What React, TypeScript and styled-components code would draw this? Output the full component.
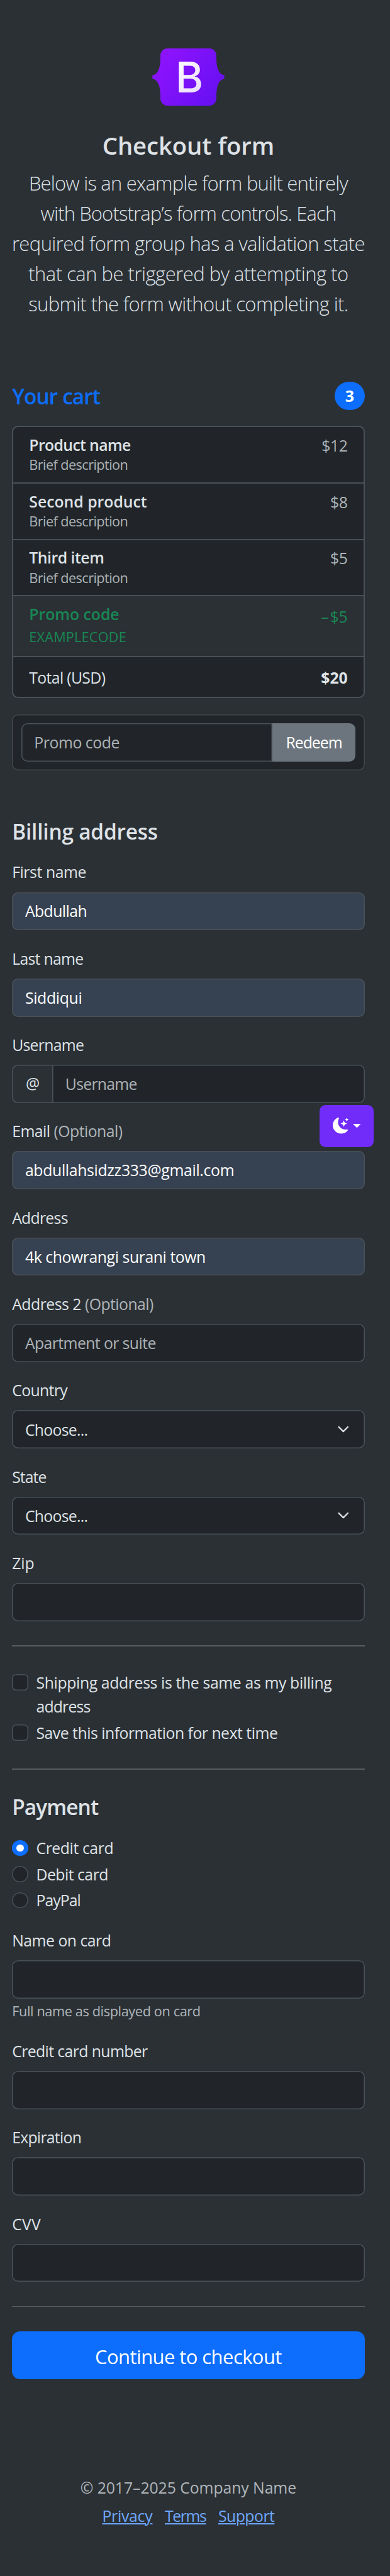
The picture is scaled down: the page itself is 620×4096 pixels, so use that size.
import React from 'react';
import styled, { createGlobalStyle } from 'styled-components';

const color = {
  page: '#2b3035',
  surface: '#212529',
  text: '#dee2e6',
  muted: 'rgba(222, 226, 230, 0.75)',
  border: '#495057',
  cardBorder: '#42464a',
  autofill: '#364151',
  primary: '#0d6efd',
  success: '#198754',
  secondary: '#6c757d',
  link: '#6ea8fe',
  violet: '#712cf9',
};

const GlobalStyle = createGlobalStyle`
  *, *::before, *::after { box-sizing: border-box; }
  html { font-size: 25.5504px; background: ${color.page}; }
  body {
    margin: 0;
    font-family: "Open Sans", "Noto Sans", sans-serif;
    font-size: 0.97rem;
    line-height: 1.5rem;
    letter-spacing: -0.5px;
    color: ${color.text};
    background: ${color.page};
    overflow-x: hidden;
  }
  h1, h2, p, ul { margin: 0; padding: 0; font: inherit; }
  ul { list-style: none; }
`;

/* Inline run of text with its own tracking and baseline drop */
const T = styled.span<{ $ls?: number; $drop?: number }>`
  line-height: 1;
  letter-spacing: ${(p) => p.$ls ?? -0.5}px;
  vertical-align: ${(p) => -(p.$drop ?? 0.6)}px;
`;

const Page = styled.div`
  position: relative;
  width: 100%;
  min-height: 4096px;
`;

const Container = styled.div`
  width: 23.4375rem;
  padding: 0 0.75rem;
`;

const Hero = styled.header`
  display: flex;
  flex-direction: column;
  align-items: center;
  padding: 3rem 0 4rem;
  text-align: center;
`;

const Logo = styled.svg`
  display: block;
  width: 4.5rem;
  height: 3.5625rem;
  margin-bottom: 1.5rem;
`;

const HeroTitle = styled.h1`
  margin-bottom: 0.5rem;
  font-size: 1.497rem;
  font-weight: 600;
  line-height: 1.853rem;
`;

const Lead = styled.p`
  font-size: 1.2125rem;
  font-weight: 300;
  line-height: 1.875rem;
  white-space: nowrap;
`;

const CartHeader = styled.div`
  display: flex;
  align-items: center;
  justify-content: space-between;
  height: 1.71rem;
  margin-bottom: 1rem;
  color: ${color.primary};
`;

const CartTitle = styled.h2`
  font-size: 1.307rem;
  font-weight: 600;
  line-height: 1.617rem;
`;

const Badge = styled.span`
  display: flex;
  align-items: center;
  justify-content: center;
  width: 1.875rem;
  height: 1.75rem;
  border-radius: 0.94rem;
  background: ${color.primary};
  color: #fff;
  font-weight: 700;
  font-size: 0.98rem;
  line-height: 1;
`;

const CartList = styled.ul`
  border-radius: 0.375rem;
  border: 2px solid ${color.border};
  background: ${color.surface};
  overflow: hidden;
`;

const CartRow = styled.li<{ $h: number; $promo?: boolean }>`
  display: flex;
  justify-content: space-between;
  height: ${(p) => p.$h}rem;
  padding: 0.5rem 0.985rem 0;
  background: ${(p) => (p.$promo ? color.page : 'transparent')};
  color: ${(p) => (p.$promo ? color.success : color.text)};
  & + & { border-top: 2px solid ${color.border}; }
`;

const ItemName = styled.div`
  font-weight: 600;
  line-height: 1.2rem;
`;

const ItemNote = styled.div<{ $lh: number; $muted?: boolean }>`
  font-size: 0.849rem;
  line-height: ${(p) => p.$lh}rem;
  color: ${(p) => (p.$muted ? color.muted : 'inherit')};
`;

const Price = styled.span<{ $lh: number; $muted?: boolean; $bold?: boolean }>`
  line-height: ${(p) => p.$lh}rem;
  font-weight: ${(p) => (p.$bold ? 700 : 400)};
  color: ${(p) => (p.$muted ? color.muted : 'inherit')};
`;

const PromoCard = styled.div`
  display: flex;
  height: 3.5rem;
  margin-top: 1rem;
  padding: 0.5625rem;
  border-radius: 0.375rem;
  background: ${color.surface};
  box-shadow: inset 0 0 0 1.6px ${color.cardBorder};
`;

const Control = styled.input<{ $filled?: boolean; $ls?: number; $join?: 'left' | 'right' }>`
  display: block;
  flex: 1;
  width: 100%;
  min-width: 0;
  height: 2.375rem;
  margin: 0;
  padding: 0 0.8125rem;
  border: 0;
  outline: 0;
  border-radius: ${(p) =>
    p.$join === 'left' ? '0.375rem 0 0 0.375rem' : p.$join === 'right' ? '0 0.375rem 0.375rem 0' : '0.375rem'};
  background: ${(p) => (p.$filled ? color.autofill : color.surface)};
  box-shadow: inset 0 0 0 1.6px ${color.border};
  color: ${(p) => (p.$filled ? '#fff' : color.text)};
  font-family: inherit;
  font-size: 0.97rem;
  letter-spacing: ${(p) => p.$ls ?? -0.5}px;
  &::placeholder { color: ${color.muted}; opacity: 1; }
`;

const RedeemButton = styled.button`
  width: 5.1875rem;
  height: 2.375rem;
  margin: 0;
  padding: 0;
  border: 0;
  border-radius: 0 0.375rem 0.375rem 0;
  background: ${color.secondary};
  color: #fff;
  font-family: inherit;
  font-size: 0.97rem;
  letter-spacing: -1px;
`;

const SectionTitle = styled.h2`
  margin-bottom: 1rem;
  font-size: 1.307rem;
  font-weight: 600;
  line-height: 1.625rem;
`;

const Billing = styled.section`
  padding-top: 2.9375rem;
`;

const Fields = styled.div`
  display: flex;
  flex-direction: column;
  gap: 1rem;
`;

const Field = styled.div`
  display: flex;
  flex-direction: column;
`;

const Label = styled.label`
  margin-bottom: 0.5rem;
`;

const Muted = styled.span`
  color: ${color.muted};
`;

const Group = styled.div`
  display: flex;
`;

const Addon = styled.span`
  display: flex;
  align-items: center;
  justify-content: center;
  width: 2.5625rem;
  height: 2.375rem;
  margin-right: -0.0625rem;
  border-radius: 0.375rem 0 0 0.375rem;
  background: ${color.page};
  box-shadow: inset 0 0 0 1.6px ${color.border};
`;

const Select = styled.div`
  display: flex;
  align-items: center;
  justify-content: space-between;
  height: 2.375rem;
  padding: 0 0.8125rem;
  border-radius: 0.375rem;
  background: ${color.surface};
  box-shadow: inset 0 0 0 1.6px ${color.border};
`;

const Chevron = styled.svg`
  width: 1rem;
  height: 0.75rem;
`;

const Rule = styled.hr`
  height: 0.0625rem;
  margin: 1.5rem 0;
  border: 0;
  background: #585c60;
`;

const Checks = styled.div`
  display: flex;
  flex-direction: column;
  gap: 0.125rem;
`;

const CheckRow = styled.label`
  display: flex;
  gap: 0.5rem;
`;

const Mark = styled.span<{ $round?: boolean; $on?: boolean }>`
  display: flex;
  flex: none;
  align-items: center;
  justify-content: center;
  width: 1rem;
  height: 1rem;
  margin-top: 0.25rem;
  border-radius: ${(p) => (p.$round ? '50%' : '0.25rem')};
  background: ${(p) => (p.$on ? color.primary : color.surface)};
  box-shadow: ${(p) => (p.$on ? 'none' : `inset 0 0 0 1.6px ${color.border}`)};
  &::after {
    content: '';
    display: ${(p) => (p.$on ? 'block' : 'none')};
    width: 0.4375rem;
    height: 0.4375rem;
    border-radius: 50%;
    background: #fff;
  }
`;

const PaymentOptions = styled(Checks)`
  margin-bottom: 1rem;
`;

const Hint = styled.small`
  font-size: 0.849rem;
  line-height: 1.5rem;
  color: ${color.muted};
`;

const SubmitButton = styled.button`
  display: block;
  width: 100%;
  height: 3rem;
  padding: 0.13rem 0 0;
  border: 0;
  border-radius: 0.5rem;
  background: ${color.primary};
  color: #fff;
  font-family: inherit;
  font-size: 1.2125rem;
  letter-spacing: -0.56px;
`;

const Footer = styled.footer`
  margin-top: 3rem;
  padding-top: 3rem;
  text-align: center;
  color: ${color.muted};
`;

const FooterLinks = styled.ul`
  display: flex;
  justify-content: center;
  gap: 0.766rem;
  margin-top: 0.25rem;
`;

const FooterLink = styled.a<{ $ls: number }>`
  color: ${color.link};
  letter-spacing: ${(p) => p.$ls}px;
  line-height: 1;
  vertical-align: -0.6px;
  text-decoration: underline;
  text-decoration-thickness: 1.6px;
  text-underline-offset: 2px;
`;

/* Floating colour-mode switch, pinned over the form */
const ModeButton = styled.button`
  position: absolute;
  top: 68.75rem;
  left: 19.875rem;
  display: flex;
  align-items: center;
  justify-content: center;
  gap: 0.25rem;
  width: 3.375rem;
  height: 2.625rem;
  padding: 0;
  border: 0;
  border-radius: 0.375rem;
  background: ${color.violet};
  color: #fff;
`;

const Moon = styled.svg`
  width: 1rem;
  height: 1rem;
`;

const Caret = styled.svg`
  width: 0.5rem;
  height: 0.25rem;
`;

function BrandLogo() {
  return (
    <Logo viewBox="0 0 118 94" role="img" aria-label="Bootstrap">
      <defs>
        <linearGradient id="brand" x1="0" y1="0" x2="118" y2="94" gradientUnits="userSpaceOnUse">
          <stop offset="0.08" stopColor="#9013fe" />
          <stop offset="0.92" stopColor="#6610f2" />
        </linearGradient>
        <linearGradient id="letter" x1="0" y1="0" x2="0.6" y2="1">
          <stop offset="0.1" stopColor="#fff" />
          <stop offset="1" stopColor="#eadcfb" />
        </linearGradient>
      </defs>
      <path
        fill="url(#brand)"
        d="M24.509 0c-6.733 0-11.715 5.893-11.492 12.284.214 6.14-.064 14.092-2.066 20.577C8.943 39.365 5.547 43.485 0 44.014v5.972c5.547.529 8.943 4.649 10.951 11.153 2.002 6.485 2.28 14.437 2.066 20.577C12.794 88.106 17.776 94 24.51 94H93.5c6.733 0 11.714-5.893 11.491-12.284-.214-6.14.064-14.092 2.066-20.577 2.009-6.504 5.396-10.624 10.943-11.153v-5.972c-5.547-.529-8.934-4.649-10.943-11.153-2.002-6.484-2.28-14.437-2.066-20.577C105.214 5.894 100.233 0 93.5 0H24.508z"
      />
      <text
        x="60.6"
        y="72.2"
        textAnchor="middle"
        fontFamily="Inter, Liberation Sans, sans-serif"
        fontWeight="500"
        fontSize="69.4"
        letterSpacing="0"
        fill="url(#letter)"
      >
        B
      </text>
    </Logo>
  );
}

function TextField(props: { label: string; ls?: number; optional?: boolean; value?: string; valueLs?: number; placeholder?: string; hint?: string }) {
  return (
    <Field>
      <Label>
        <T $ls={props.ls}>{props.label}</T>
        {props.optional && <Muted> <T $ls={-0.53}>(Optional)</T></Muted>}
      </Label>
      <Group>
        <Control $filled={!!props.value} $ls={props.valueLs} defaultValue={props.value} placeholder={props.placeholder} />
      </Group>
      {props.hint && <Hint><T $ls={-0.37}>{props.hint}</T></Hint>}
    </Field>
  );
}

function SelectField({ label, ls }: { label: string; ls: number }) {
  return (
    <Field>
      <Label><T $ls={ls}>{label}</T></Label>
      <Select>
        <div><T $ls={-0.71}>Choose...</T></div>
        <Chevron viewBox="0 0 16 16" fill="none" stroke={color.text} strokeWidth="2" strokeLinecap="round" strokeLinejoin="round">
          <path d="m2 5 6 6 6-6" />
        </Chevron>
      </Select>
    </Field>
  );
}

const products = [
  { name: 'Product name', ls: -0.62, price: '$12' },
  { name: 'Second product', ls: 0, price: '$8' },
  { name: 'Third item', ls: -0.48, price: '$5' },
];

const leadLines: [string, number][] = [
  ['Below is an example form built entirely', -0.79],
  ['with Bootstrap’s form controls. Each', -0.86],
  ['required form group has a validation state', -0.59],
  ['that can be triggered by attempting to', -0.5],
  ['submit the form without completing it.', -0.64],
];

export default function App() {
  return (
    <Page>
      <GlobalStyle />
      <Container>
        <Hero>
          <BrandLogo />
          <HeroTitle><T $ls={-0.07} $drop={1.8}>Checkout form</T></HeroTitle>
          <Lead>
            {leadLines.map(([line, ls], i) => (
              <React.Fragment key={line}>
                {i > 0 && <br />}
                <T $ls={ls} $drop={1.6}>{line}</T>
              </React.Fragment>
            ))}
          </Lead>
        </Hero>

        <section>
          <CartHeader>
            <CartTitle><T $ls={-0.88}>Your cart</T></CartTitle>
            <Badge>3</Badge>
          </CartHeader>
          <CartList>
            {products.map((p, i) => (
              <CartRow key={p.name} $h={i === 0 ? 3.44 : 3.5125}>
                <div>
                  <ItemName><T $ls={p.ls}>{p.name}</T></ItemName>
                  <ItemNote $lh={1.23} $muted><T $ls={-0.58} $drop={1}>Brief description</T></ItemNote>
                </div>
                <Price $lh={1.23} $muted><T $ls={-0.41}>{p.price}</T></Price>
              </CartRow>
            ))}
            <CartRow $h={3.78} $promo>
              <div>
                <ItemName><T $ls={0}>Promo code</T></ItemName>
                <ItemNote $lh={1.53}><T $ls={0.19} $drop={1}>EXAMPLECODE</T></ItemNote>
              </div>
              <Price $lh={1.45}><T $ls={2}>–</T><T $ls={-0.2}>$5</T></Price>
            </CartRow>
            <CartRow $h={2.56}>
              <Price $lh={1.5}><T $ls={-0.64}>Total (USD)</T></Price>
              <Price $lh={1.5} $bold><T $ls={-0.11}>$20</T></Price>
            </CartRow>
          </CartList>
          <PromoCard>
            <Control placeholder="Promo code" $ls={-0.43} $join="left" />
            <RedeemButton>Redeem</RedeemButton>
          </PromoCard>
        </section>

        <Billing>
          <SectionTitle><T $ls={-0.2} $drop={1.6}>Billing address</T></SectionTitle>
          <Fields>
            <TextField label="First name" ls={-0.41} value="Abdullah" valueLs={-0.55} />
            <TextField label="Last name" ls={-0.7} value="Siddiqui" valueLs={-0.32} />
            <Field>
              <Label><T $ls={-0.71}>Username</T></Label>
              <Group>
                <Addon>@</Addon>
                <Control placeholder="Username" $ls={-0.71} $join="right" />
              </Group>
            </Field>
            <TextField label="Email" optional value="abdullahsidzz333@gmail.com" valueLs={-0.32} />
            <TextField label="Address" ls={-0.72} value="4k chowrangi surani town" valueLs={-0.41} />
            <TextField label="Address 2" ls={-0.49} optional placeholder="Apartment or suite" valueLs={-0.58} />
            <SelectField label="Country" ls={-0.62} />
            <SelectField label="State" ls={-0.92} />
            <TextField label="Zip" ls={0} />
          </Fields>

          <Rule />

          <Checks>
            <CheckRow>
              <Mark />
              <div>
                <T $ls={-0.36}>Shipping address is the same as my billing</T>
                <br />
                <T $ls={-0.82}>address</T>
              </div>
            </CheckRow>
            <CheckRow>
              <Mark />
              <div><T $ls={-0.48}>Save this information for next time</T></div>
            </CheckRow>
          </Checks>

          <Rule />

          <SectionTitle><T $ls={-0.87} $drop={1.2}>Payment</T></SectionTitle>
          <PaymentOptions>
            <CheckRow><Mark $round $on /><div><T $ls={-0.41}>Credit card</T></div></CheckRow>
            <CheckRow><Mark $round /><div><T $ls={-0.5}>Debit card</T></div></CheckRow>
            <CheckRow><Mark $round /><div><T $ls={-0.95}>PayPal</T></div></CheckRow>
          </PaymentOptions>
          <Fields>
            <TextField label="Name on card" ls={-0.49} hint="Full name as displayed on card" />
            <TextField label="Credit card number" ls={-0.59} />
            <TextField label="Expiration" ls={-0.72} />
            <TextField label="CVV" ls={0.2} />
          </Fields>

          <Rule />

          <SubmitButton>Continue to checkout</SubmitButton>
        </Billing>

        <Footer>
          <p><T $ls={-0.06}>© 2017–2025 Company Name</T></p>
          <FooterLinks>
            <li><FooterLink $ls={-0.25}>Privacy</FooterLink></li>
            <li><FooterLink $ls={-1.4}>Terms</FooterLink></li>
            <li><FooterLink $ls={-0.5}>Support</FooterLink></li>
          </FooterLinks>
        </Footer>
      </Container>

      <ModeButton aria-label="Toggle theme">
        <Moon viewBox="0 0 16 16" fill="currentColor">
          <path d="M6 .278a.768.768 0 0 1 .08.858 7.208 7.208 0 0 0-.878 3.46c0 4.021 3.278 7.277 7.318 7.277.527 0 1.04-.055 1.533-.16a.787.787 0 0 1 .81.316.733.733 0 0 1-.031.893A8.349 8.349 0 0 1 8.344 16C3.734 16 0 12.286 0 7.71 0 4.266 2.114 1.312 5.124.06A.752.752 0 0 1 6 .278z" />
          <path d="M10.794 3.148a.217.217 0 0 1 .412 0l.387 1.162c.173.518.579.924 1.097 1.097l1.162.387a.217.217 0 0 1 0 .412l-1.162.387a1.734 1.734 0 0 0-1.097 1.097l-.387 1.162a.217.217 0 0 1-.412 0l-.387-1.162A1.734 1.734 0 0 0 9.31 6.593l-1.162-.387a.217.217 0 0 1 0-.412l1.162-.387a1.734 1.734 0 0 0 1.097-1.097l.387-1.162zM13.863.099a.145.145 0 0 1 .274 0l.258.774c.115.346.386.617.732.732l.774.258a.145.145 0 0 1 0 .274l-.774.258a1.156 1.156 0 0 0-.732.732l-.258.774a.145.145 0 0 1-.274 0l-.258-.774a1.156 1.156 0 0 0-.732-.732l-.774-.258a.145.145 0 0 1 0-.274l.774-.258c.346-.115.617-.386.732-.732L13.863.1z" />
        </Moon>
        <Caret viewBox="0 0 16 8" fill="currentColor">
          <path d="M0 0h16L8 8z" />
        </Caret>
      </ModeButton>
    </Page>
  );
}
